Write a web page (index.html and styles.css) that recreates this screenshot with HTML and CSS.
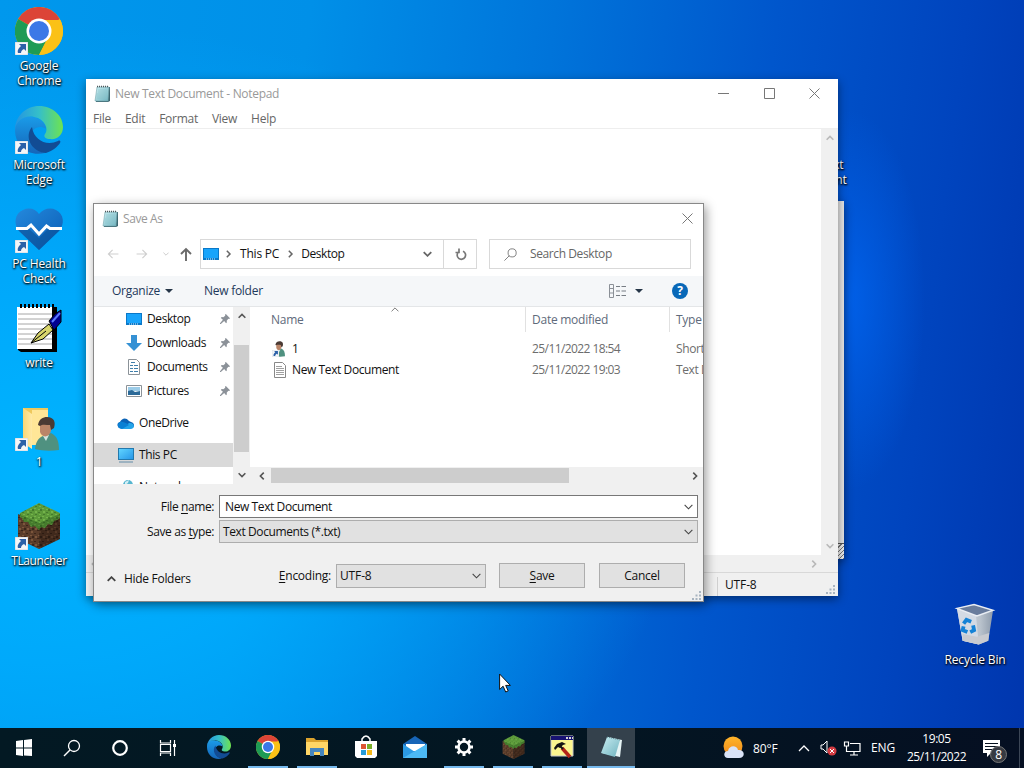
FILE: index.html
```html
<!DOCTYPE html>
<html lang="en">
<head>
<meta charset="utf-8">
<title>Desktop</title>
<link rel="stylesheet" href="styles.css">
</head>
<body>
<svg class="defs" width="0" height="0">
  <defs>
    <linearGradient id="edgeA" x1="0" y1="0" x2="1" y2="0"><stop offset="0" stop-color="#2494e2"/><stop offset=".5" stop-color="#35bfc9"/><stop offset="1" stop-color="#6fe34f"/></linearGradient>
    <linearGradient id="edgeB" x1="0" y1="0" x2="0" y2="1"><stop offset="0" stop-color="#1a9be8"/><stop offset="1" stop-color="#1565b9"/></linearGradient>
    <linearGradient id="pad" x1="0" y1="0" x2="1" y2="1"><stop offset="0" stop-color="#c9edf2"/><stop offset="1" stop-color="#6fb3bf"/></linearGradient>
    <linearGradient id="screen" x1="0" y1="0" x2="1" y2="1"><stop offset="0" stop-color="#60d4ff"/><stop offset="1" stop-color="#2797e8"/></linearGradient>
    <linearGradient id="heart" x1="0" y1="0" x2="1" y2="1"><stop offset="0" stop-color="#2488dc"/><stop offset="1" stop-color="#0a5db4"/></linearGradient>
    <linearGradient id="bin" x1="0" y1="0" x2="1" y2="0"><stop offset="0" stop-color="#cbd5df"/><stop offset=".65" stop-color="#b9c2cc"/><stop offset="1" stop-color="#8e9bab"/></linearGradient>
    <linearGradient id="fold" x1="0" y1="0" x2="1" y2="0"><stop offset="0" stop-color="#f8d775"/><stop offset="1" stop-color="#ffe9a6"/></linearGradient>
    <linearGradient id="sun" x1="0" y1="0" x2="0" y2="1"><stop offset="0" stop-color="#ffb52a"/><stop offset="1" stop-color="#f08a1c"/></linearGradient>
    <pattern id="grassPx" width="8" height="8" patternUnits="userSpaceOnUse"><path fill="#5c9a3a" d="M0 0h8v8H0z"/><path fill="#74b34b" d="M1 0h2v2H1zM5 3h2v1H5zM0 5h2v1H0zM4 6h2v1H4z"/><path fill="#447a2c" d="M4 1h2v1H4zM1 3h2v1H1zM6 6h2v2H6z"/></pattern>
    <pattern id="dirtPx" width="8" height="8" patternUnits="userSpaceOnUse"><path fill="#5a3c2a" d="M0 0h8v8H0z"/><path fill="#7c563c" d="M1 1h2v2H1zM5 4h2v2H5zM4 0h2v1H4z"/><path fill="#3a251a" d="M3 3h2v1H3zM0 6h2v1H0zM6 1h2v2H6z"/></pattern>
    <symbol id="chrome" viewBox="0 0 48 48">
      <circle cx="24" cy="24" r="24" fill="#fbc116"/>
      <path fill="#dc4437" d="M24 24 3.2 12A24 24 0 0 1 44.8 12z"/>
      <path fill="#1e9b55" d="M24 24 3.2 12A24 24 0 0 0 24 48l9.5-18.500z"/>
      <path fill="#fbc116" d="M24 13h21.300A24 24 0 0 1 24 48l9.500-18.500z"/>
      <circle cx="24" cy="24" r="12.500" fill="#fff"/><circle cx="24" cy="24" r="10" fill="#3b78e7"/>
    </symbol>
    <symbol id="edge" viewBox="0 0 48 48">
      <path fill="url(#edgeB)" d="M0 24C0 14 8 9 17 11c9 1 14 7 14 12-7-5-16 0-15 10 1 8 7 12 14 14C13 51 0 40 0 24z"/>
      <path fill="url(#edgeA)" d="M0 24C0 10 11 0 24 0c14 0 24 10 24 21 0 8-6 13-13 12-4 0-7-2-5-5 4-5 0-15-11-17C9 9 1 15 0 24z"/>
      <path fill="#124c94" d="M17 21c-8 9-1 25 14 26 7-2 12-7 14-10 1-2 0-3-2-2-11 5-24 0-26-14z"/>
    </symbol>
    <symbol id="shortcut" viewBox="0 0 13 13"><path fill="#f4f6f8" stroke="#b9c4cf" stroke-width=".6" d="M0 0h13v13H0z"/><path fill="#2c61a8" d="M4 2h7v7L9 7C7 8 6 9 6 11H3C2 8 4 6 6 4z"/></symbol>
    <symbol id="notepad" viewBox="0 0 16 17">
      <path fill="#3b6670" d="M14 2h2v14l-2 1H2v-1z"/><path fill="url(#pad)" stroke="#76a6ad" stroke-width=".6" d="M3 2h12l-1 14H1z"/>
      <path stroke="#4d595c" stroke-width="1.500" stroke-dasharray="1 1" d="M3 1.500h12"/><path stroke="#8ac3ca" stroke-width=".6" d="M4 5h9M4 7h9M3 9h10M3 11h10M3 13h10"/>
    </symbol>
    <symbol id="block" viewBox="0 0 42 46">
      <path fill="url(#dirtPx)" d="M0 11 21 21v25L0 36z"/><path fill="url(#dirtPx)" d="M42 11 21 21v25l21-10z"/><path fill="#1a0c08" opacity=".4" d="M42 11 21 21v25l21-10z"/>
      <path fill="url(#grassPx)" d="M21 0 42 10v5l-3 2-3 1-2 4-4-1-3 4-4-1-2 3-4-4-4 1-3-5-4 0-2-4-2-1v-4z"/><path fill="#1e4517" opacity=".35" d="m0 11 21 9 21-9v4l-6 3-2 4-4-1-3 4-4-1-2 3-4-4-4 1-3-5-4 0-2-4z"/>
    </symbol>
    <symbol id="person" viewBox="0 0 24 34">
      <path fill="#4f9180" d="M0 32c1-9 5-12 8-13l8-3c6 3 8 8 8 17-8 1-17 1-24-1z"/><path fill="#d3e6e2" d="m8 19 3 5 3-6z"/><path fill="#ba8568" d="M5 5h11v9c-2 7-9 7-11 1z"/><path fill="#4a3a34" d="M3 8C4 2 8 0 12 0c7 0 9 5 7 11l-3 2-1-5C11 8 7 7 5 9z"/>
    </symbol>
    <symbol id="desk" viewBox="0 0 16 12"><path fill="#0a78c8" d="M0 0h16v12H0z"/><path fill="#18a4fb" d="M1 1h14v9H1z"/><path stroke="#d8f1ff" stroke-dasharray="1 1" d="M3 11h10"/></symbol>
    <symbol id="pin" viewBox="0 0 12 12"><path fill="#8b9198" d="m7 0 5 5-1 1-1-.300L8 8l.300 2-1 1L5 8.500 1 12H0v-1l3.500-4L1 4.700l1-1L4 4l2.300-2L6 1z"/></symbol>
    <symbol id="down" viewBox="0 0 10 6"><path d="m.7.700 4.300 4.300L9.300.700" fill="none" stroke="currentColor" stroke-width="1.200"/></symbol>
    <symbol id="downB" viewBox="0 0 10 6"><path d="m.8.800L5 5 9.200.800" fill="none" stroke="currentColor" stroke-width="2"/></symbol>
    <symbol id="cross" viewBox="0 0 11 11"><path d="m.5.500 10 10m0-10-10 10" fill="none" stroke="currentColor"/></symbol>
    <symbol id="grip" viewBox="0 0 9 9"><path fill="#a8b4c0" d="M7 0h2v2H7zM7 3.500h2v2H7zM7 7h2v2H7zM3.500 3.500h2v2h-2zM3.500 7h2v2h-2zM0 7h2v2H0z"/></symbol>
    <symbol id="glass" viewBox="0 0 16 16"><circle cx="10" cy="6" r="5" fill="none" stroke="currentColor"/><path d="M6.500 9.500.5 15.500" stroke="currentColor"/></symbol>
  </defs>
</svg>

<main class="desktop">
  <div class="shortcuts">
    <div class="shortcut"><div class="art"><svg width="48" height="48"><use href="#chrome"/></svg><svg class="arrow"><use href="#shortcut"/></svg></div><span>Google<br>Chrome</span></div>
    <div class="shortcut"><div class="art"><svg width="48" height="48"><use href="#edge"/></svg><svg class="arrow"><use href="#shortcut"/></svg></div><span>Microsoft<br>Edge</span></div>
    <div class="shortcut"><div class="art"><svg width="48" height="48" viewBox="0 0 48 48"><path fill="url(#heart)" d="M24 45 4 26C-2 19 0 8 8 5c6-3 13-1 16 4 4-5 11-7 17-4 8 4 9 14 3 21z"/><path fill="#08498e" opacity=".5" d="M3 25l11-1 10 9 9-9 12 1-21 20z"/><path fill="none" stroke="#fff" stroke-width="3" d="M1 23.500h11l4-3.500 8 9 7.500-8 3.500 2.500h12"/></svg><svg class="arrow"><use href="#shortcut"/></svg></div><span>PC Health<br>Check</span></div>
    <div class="shortcut"><div class="art"><svg width="48" height="48" viewBox="0 0 48 48"><path fill="#000" d="M4 3h38v45H6l-3-2z"/><path fill="#fff" d="M2 3h35v42H2z"/><path stroke="#a6a6a6" d="M3 10h34M3 15h34M3 20h34M3 25h34M3 30h34M3 35h34M3 40h34"/><path stroke="#000" stroke-width="4" stroke-dasharray="2 2" d="M5 2h34"/><path fill="#000090" stroke="#000" d="m34 17 6-7 6-4v12l-7 8z"/><path fill="#d8d56c" stroke="#000" d="m16 39 7-10 11-9 4 6-10 9z"/><path stroke="#000" d="m16 39 15-12"/><path stroke="#5b78ff" stroke-width="2" d="m37 18 8-9"/></svg></div><span>write</span></div>
    <div class="shortcut"><div class="art"><svg width="48" height="48" viewBox="0 0 48 48"><path fill="#eec85c" d="M8 5h25v37H8z"/><path fill="url(#fold)" d="m8 5 9 6v35l-9-6z"/><path fill="#ffe697" d="M17 7h16v35H17z"/><svg x="20" y="14" width="24" height="34"><use href="#person"/></svg></svg><svg class="arrow"><use href="#shortcut"/></svg></div><span>1</span></div>
    <div class="shortcut"><div class="art"><svg width="48" height="48" viewBox="0 0 48 48"><use href="#block" x="3" y="1" width="42" height="46"/></svg><svg class="arrow"><use href="#shortcut"/></svg></div><span class="tight">TLauncher</span></div>
  </div>
  <div class="shortcut hidden-file"><span>New Text<br>Document</span></div>
  <div class="shortcut recycle"><svg width="38" height="43" viewBox="0 0 40 44"><path fill="url(#bin)" d="m1 5 6 34 17 4 10-4 5-32-20 5z"/><path fill="#d3dae4" d="m1 5 6 34 17 4-3-31z"/><path fill="#c9cbd0" d="m7 32 15 3 13-4-1 8-10 4-17-4z"/><path fill="#697c9c" stroke="#e9edf3" stroke-width="1.500" d="M1 5 19 1l20 6-17 6z"/><g fill="none" stroke="#1482d6" stroke-width="4"><path d="m8 21 3-4 5 2M18 23l1 5-4 2M12 30l-5-2 1-4"/></g></svg><span>Recycle Bin</span></div>

  <div class="window behind"><div class="behind-grip"></div></div>

  <section class="window notepad">
    <header class="titlebar"><svg width="16" height="17"><use href="#notepad"/></svg><h1>New Text Document - Notepad</h1>
      <div class="controls"><svg width="11" height="11"><path d="M0 5.500h11" stroke="#777"/></svg><svg width="11" height="11"><path d="M.5.500h10v10H.5z" fill="none" stroke="#777"/></svg><svg width="11" height="11"><use href="#cross"/></svg></div>
    </header>
    <nav class="menu"><span>File</span><span>Edit</span><span>Format</span><span>View</span><span>Help</span></nav>
    <div class="editor"><div class="paper"></div><div class="scroll-v pale"><svg class="chev up"><use href="#downB"/></svg><svg class="chev"><use href="#downB"/></svg></div></div>
    <div class="scroll-h pale"><svg class="chev left"><use href="#downB"/></svg><svg class="chev right"><use href="#downB"/></svg></div>
    <footer class="status"><span>UTF-8</span><svg width="9" height="9"><use href="#grip"/></svg></footer>
  </section>

  <section class="window dialog">
    <header class="titlebar"><svg width="16" height="17"><use href="#notepad"/></svg><h1>Save As</h1><svg class="close" width="11" height="11"><use href="#cross"/></svg></header>
    <div class="navbar">
      <div class="history"><svg width="12" height="10" viewBox="0 0 13 12"><path d="M6 1 1 6l5 5M1 6h12" fill="none" stroke="#cfcfcf" stroke-width="1.400"/></svg><svg width="12" height="10" viewBox="0 0 13 12"><path d="m7 1 5 5-5 5m5-5H0" fill="none" stroke="#cfcfcf" stroke-width="1.400"/></svg><svg class="tiny" width="6" height="4"><use href="#down"/></svg><svg width="12" height="13"><path d="m1 6 5-5 5 5M6 1v12" fill="none" stroke="#6a6a6a" stroke-width="1.900"/></svg></div>
      <div class="address"><svg width="16" height="12"><use href="#desk"/></svg><svg class="crumb" viewBox="0 0 5 8"><path d="m.8.800L4 4 .8 7.200" fill="none" stroke="#666" stroke-width="1.500"/></svg><span class="place">This PC</span><svg class="crumb" viewBox="0 0 5 8"><path d="m.8.800L4 4 .8 7.200" fill="none" stroke="#666" stroke-width="1.500"/></svg><span>Desktop</span><svg class="expand" width="9" height="6"><use href="#downB"/></svg></div>
      <div class="refresh"><svg width="12" height="13" viewBox="0 0 12 13"><path d="M7.500 3.200A4.200 4.200 0 1 1 3 4M3.500.500V4.500H0" transform="translate(1.500 0)" fill="none" stroke="#777" stroke-width="1.700"/></svg></div>
      <div class="search"><svg width="13" height="13"><use href="#glass"/></svg><span>Search Desktop</span></div>
    </div>
    <div class="toolbar"><span>Organize</span><i class="triangle"></i><span class="new-folder">New folder</span>
      <svg class="view" width="17" height="14"><path d="M.5.500h4v13h-4zM.5 4.500h4M.5 9h4" fill="none" stroke="#8b9097"/><path d="M7 2.500h4m1.500 0H17M7 7h4m1.500 0H17M7 11.500h4m1.500 0H17" stroke="#777d84"/></svg><i class="triangle"></i><span class="help">?</span></div>
    <div class="browser">
      <div class="tree">
        <div class="node sub"><svg width="16" height="12"><use href="#desk"/></svg><span>Desktop</span><svg class="pin"><use href="#pin"/></svg></div>
        <div class="node sub"><svg width="16" height="16"><path fill="#3591d4" d="M5 0h6v8h5l-8 8-8-8h5z"/></svg><span>Downloads</span><svg class="pin"><use href="#pin"/></svg></div>
        <div class="node sub"><svg width="16" height="16"><path fill="#fff" stroke="#8b9298" d="M2.500.500h8l3 3v12h-11z"/><path stroke="#3f7fab" d="M5 3.500h4M4 6.500h3m1 0h4M4 9.500h3m1 0h4M4 12.500h3m1 0h4"/></svg><span>Documents</span><svg class="pin"><use href="#pin"/></svg></div>
        <div class="node sub"><svg width="16" height="12"><path fill="#fff" stroke="#8b9298" d="M.5.500h15v11H.5z"/><path fill="#9ccce8" d="M2 2h12v4H2z"/><path fill="#2c6a98" d="m2 6 4-1 3 2 5-1v4H2z"/></svg><span>Pictures</span><svg class="pin"><use href="#pin"/></svg></div>
        <div class="node spaced"><svg width="16" height="11"><path fill="#0b63b6" d="M3 10a3 3 0 0 1-1-6C4 0 8-1 11 3l2 1c4 1 4 6 0 6z"/><path fill="#24a4e9" d="m3 11 8-6c5-1 7 5 2 6z"/><path fill="#0a80d4" d="M2 4c4-1 7 2 9 3l-7 4C-1 11-1 5 2 4z"/></svg><span>OneDrive</span></div>
        <div class="node spaced selected"><svg width="16" height="15"><path fill="#2379ad" d="M0 0h16v12H0z"/><path fill="url(#screen)" d="M1 1h14v10H1z"/><path stroke="#638ca8" d="M1 14h14"/></svg><span>This PC</span></div>
        <div class="node spaced"><svg width="16" height="15"><circle cx="10" cy="5" r="5" fill="#57b6d0"/><path fill="#d2eef5" d="m7 2 4-2-1 3-3 2z"/><path fill="#2a8fd0" d="M2 8h9v6H2z"/></svg><span>Network</span></div>
      </div>
      <div class="scroll-v"><svg class="chev up"><use href="#downB"/></svg><i class="thumb-v"></i><svg class="chev"><use href="#downB"/></svg></div>
      <div class="files">
        <div class="columns"><span>Name</span><span>Date modified</span><span>Type</span><svg class="sort" width="8" height="5"><use href="#down"/></svg></div>
        <div class="row"><svg width="16" height="16" viewBox="0 0 16 16"><use href="#person" x="2" y="0" width="11" height="16"/><use href="#shortcut" x="0" y="9" width="7" height="7"/></svg><span class="name">1</span><span class="date">25/11/2022 18:54</span><span class="type">Shortcut</span></div>
        <div class="row"><svg width="16" height="16"><path fill="#fff" stroke="#888" d="M2.500.500h8l3 3v12h-11z"/><path stroke="#a0a0a0" d="M4 4.500h6M4 6.500h8M4 8.500h8M4 10.500h8M4 12.500h8"/></svg><span class="name">New Text Document</span><span class="date">25/11/2022 19:03</span><span class="type">Text Document</span></div>
        <div class="scroll-h"><svg class="chev left"><use href="#downB"/></svg><i class="thumb-h"></i><svg class="chev right"><use href="#downB"/></svg></div>
      </div>
    </div>
    <div class="form">
      <div class="field first"><label>File <u>n</u>ame:</label><div class="combo input"><span>New Text Document</span><svg width="9" height="6"><use href="#down"/></svg></div></div>
      <div class="field"><label>Save as <u>t</u>ype:</label><div class="combo"><span>Text Documents (*.txt)</span><svg width="9" height="6"><use href="#down"/></svg></div></div>
      <div class="actions"><svg class="hide-icon" width="9" height="6"><use href="#downB"/></svg><span class="hide">Hide Folders</span><label><u>E</u>ncoding:</label><div class="combo encoding"><span>UTF-8</span><svg width="9" height="6"><use href="#down"/></svg></div><button><u>S</u>ave</button><button>Cancel</button></div>
      <svg class="grip" width="9" height="9"><use href="#grip"/></svg>
    </div>
  </section>
  <svg class="cursor" width="12" height="20" viewBox="0 0 12 20"><path fill="#fff" stroke="#111" d="M.6 1v15.500l3.500-3.300L6.700 19l2.500-1.100-2.500-5.500h4.700z"/></svg>
</main>

<footer class="taskbar">
  <div class="system">
    <svg width="48" height="40"><path fill="#fff" d="m16 13 7-1v7.500h-7zM24 12l8-1v8.500h-8zM16 20.500h7V28l-7-1zM24 20.500h8V28l-8-.500z"/></svg>
    <svg width="48" height="40"><circle cx="26" cy="18" r="5.500" fill="none" stroke="#fff" stroke-width="1.300"/><path stroke="#fff" stroke-width="1.400" d="m22 22-6 6"/></svg>
    <svg width="48" height="40"><circle cx="24" cy="20" r="6.800" fill="none" stroke="#fff" stroke-width="2.200"/></svg>
    <svg width="48" height="40"><path fill="none" stroke="#fff" stroke-width="1.200" d="M16.500 12v3h10v-3m-10 4.500h10v7h-10zM16.500 28v-3h10v3M30.500 12v16"/><path fill="#fff" d="M29 16h3v3h-3z"/></svg>
  </div>
  <div class="apps">
    <div class="app"><svg width="24" height="24"><use href="#edge"/></svg></div>
    <div class="app open"><svg width="24" height="24"><use href="#chrome"/></svg></div>
    <div class="app open"><svg width="22" height="20"><path fill="#dba32d" d="M0 1h8l2 2h12v15H0z"/><path fill="#ffd666" d="M0 5h22v13H0z"/><path fill="#4686be" d="M4 11h14v8h-4v-4H8v4H4z"/></svg></div>
    <div class="app"><svg width="24" height="24"><path fill="none" stroke="#fff" stroke-width="1.500" d="M8 7V4q4-6 8 0v3"/><path fill="#fff" d="M1 6h22v15l-2 2H3l-2-2z"/><path fill="#dd5532" d="M7 9h5v5H7z"/><path fill="#79ae29" d="M13 9h5v5h-5z"/><path fill="#279bd7" d="M7 15h5v5H7z"/><path fill="#f6b91b" d="M13 15h5v5h-5z"/></svg></div>
    <div class="app"><svg width="24" height="23"><path fill="#1765b7" d="M0 8 12 0l12 8v14H0z"/><path fill="#fff" d="M3 8h19v7H3z"/><path fill="#2c9ae4" d="m0 8 12 8 12-8v14H0z"/><path fill="#4cb9f4" d="m0 22 24-14v14z"/></svg></div>
    <div class="app open"><svg width="20" height="20" viewBox="-10 -10 20 20"><circle r="5.500" fill="none" stroke="#fff" stroke-width="2.600"/><g stroke="#fff" stroke-width="3"><path d="M0-9v3M0 6v3M-9 0h3M6 0h3M-6.400-6.400l2 2M4.400 4.400l2 2M-6.400 6.400l2-2M4.400-4.400l2-2"/></g></svg></div>
    <div class="app open"><svg width="23" height="24"><use href="#block"/></svg></div>
    <div class="app open"><svg width="24" height="24"><path fill="#fbf68f" stroke="#c9c9c9" d="M1 1h22v20H1z"/><path fill="#171273" d="M1 1h22v4H1z"/><path stroke="#d6d6d6" stroke-width="2" stroke-dasharray="2 1" d="M16 3h7"/><path stroke="#b42418" stroke-width="3.500" d="m12 13 8 9"/><path stroke="#151515" stroke-width="2" d="m9 10 4 4"/><path fill="#151515" d="m4 13 3-4 5-2 4 2-3 1-3 3-2-1-3 3z"/></svg></div>
    <div class="app open active"><svg width="23" height="23"><path fill="#e6f4f5" d="m8 1 14 3-2 17-18-4z"/><path fill="url(#pad)" d="m7 1 13 3-5 17-14-4z"/><path stroke="#50838d" stroke-dasharray="1 1" d="m7 1 13 3"/></svg></div>
  </div>
  <div class="tray">
    <svg class="weather" width="24" height="24"><circle cx="11" cy="10" r="9.500" fill="url(#sun)"/><path fill="#d9e3f8" d="M6 22c-5 0-5-7 0-7 1-6 9-6 10-1 7-1 8 8 1 8z"/></svg>
    <span class="temp">80°F</span>
    <svg class="tray-up" width="12" height="7"><path d="m1 6 5-5 5 5" fill="none" stroke="#fff" stroke-width="1.300"/></svg>
    <svg class="sound" width="17" height="16"><path fill="none" stroke="#fff" d="M1 5h2l4-4v12L3 9H1z"/><circle cx="12" cy="11" r="4.500" fill="#d33b42"/><path stroke="#fff" d="m10 9 4 4m0-4-4 4"/></svg>
    <svg class="net" width="17" height="15"><path fill="none" stroke="#fff" stroke-width="1.200" d="M6 2.500h10v8H3M.5 1h4v4h-4zM2.500 5v6M10 11v3m-4 0h8"/></svg>
    <span class="lang">ENG</span>
    <div class="clock"><span>19:05</span><span>25/11/2022</span></div>
    <div class="notice"><svg width="17" height="17"><path fill="#fff" d="M0 0h17v13H8l-4 4v-4H0z"/><path stroke="#07121f" d="M2 3.500h13M2 6.500h13M2 9.500h8"/></svg><b>8</b></div>
    <i class="show-desktop"></i>
  </div>
</footer>
</body>
</html>
```
FILE: styles.css
```css
* { box-sizing: border-box; }
body { margin: 0; width: 1024px; height: 768px; overflow: hidden; display: flex; flex-direction: column; font: 12px/16px "Open Sans", "Noto Sans", sans-serif; letter-spacing: -.4px; color: #111; }
svg { display: block; flex: none; overflow: visible; }
.defs { position: absolute; }
h1 { margin: 0; font: inherit; letter-spacing: -.31px; }
u { text-underline-offset: 2px; text-decoration-thickness: 1px; }

.desktop { position: relative; height: 728px; flex: none; background:
  radial-gradient(ellipse 75px 190px at 850px 300px, rgba(0, 100, 240, .8), transparent),
  linear-gradient(97deg, #0098ed 0%, #0090e8 28%, #0074da 50%, #0056cc 70%, #0044be 87%, #0036ae 100%);
}
.desktop::before { content: ""; position: absolute; inset: 0; background: radial-gradient(ellipse 620px 460px at 60px 480px, #00b4ff 0%, rgba(0, 174, 255, .8) 40%, transparent 100%); }

.shortcuts { position: relative; width: 78px; padding-top: 7px; display: flex; flex-direction: column; }
.shortcut { height: 99px; display: flex; flex-direction: column; align-items: center; color: #fff; line-height: 15px; letter-spacing: -.15px; text-align: center; text-shadow: 0 1px 2px #000, 1px 1px 2px #000; }
.shortcut span { margin-top: 3px; white-space: nowrap; }
.shortcut .tight { letter-spacing: -.4px; }
.art { position: relative; height: 48px; }
.arrow { position: absolute; left: 0; bottom: 0; width: 13px; height: 13px; }
.recycle { position: absolute; left: 935px; top: 603px; width: 80px; }
.recycle span { margin-top: 6px; }
.hidden-file { position: absolute; left: 779px; top: 154px; width: 78px; }

.window { position: absolute; display: flex; flex-direction: column; background: #fff; box-shadow: 0 3px 9px rgba(0, 0, 0, .45); }
.behind { left: 500px; top: 201px; width: 344px; height: 358px; background: #e4e4e4; }
.behind-grip { margin: auto 0 0 auto; width: 6px; height: 16px; border-top: 1px solid #555; background: repeating-linear-gradient(135deg, #eee 0 2px, #777 2px 3px); }
.notepad { left: 86px; top: 79px; width: 752px; height: 517px; }
.titlebar { height: 29px; flex: none; display: flex; align-items: center; gap: 5px; padding-left: 8px; color: #999; }
.controls { margin-left: auto; display: flex; gap: 34.5px; padding-right: 18px; color: #777; }
.menu { height: 20px; padding: 3px 7px; display: flex; gap: 14px; color: #666; letter-spacing: -.27px; }
.editor { display: flex; height: 427px; border-top: 1px solid #eee; }
.paper { flex: 1; }
.scroll-v { width: 17px; flex: none; background: #f0f0f0; display: flex; flex-direction: column; align-items: center; padding: 6px 0; color: #555; }
.scroll-v .chev:last-child { margin-top: auto; }
.scroll-h { height: 17px; flex: none; background: #f0f0f0; display: flex; align-items: center; padding: 0 4px; color: #555; }
.pale { color: #b9b9b9; }
.notepad > .scroll-h { padding-right: 20px; }
.chev { width: 8px; height: 6px; }
.up { transform: rotate(180deg); }
.left { transform: rotate(90deg); }
.right { transform: rotate(-90deg); margin-left: auto; }
.status { flex: 1; border-top: 1px solid #d8d8d8; background: #f0f0f0; display: flex; padding: 4px 3px 0 631px; letter-spacing: -.14px; }
.status span { border-left: 1px solid #d0d0d0; padding-left: 7px; }
.status svg { margin: 8px 0 0 auto; }

.dialog { left: 93px; top: 203px; width: 611px; height: 399px; border: 1px solid #888; box-shadow: 2px 3px 10px rgba(0, 0, 0, .4); }
.dialog .titlebar { padding-right: 10px; }
.dialog h1 { letter-spacing: -.4px; }
.close { margin-left: auto; color: #777; }
.navbar { display: flex; height: 30px; margin-top: 6px; flex: none; }
.history { width: 106px; display: flex; align-items: center; padding-left: 13px; gap: 17px; }
.history .tiny { margin: 0 -6px 0 -2px; color: #bbb; }
.address { width: 244px; border: 1px solid #d9d9d9; display: flex; align-items: center; padding: 0 11px 0 2px; letter-spacing: -.2px; }
.address .place { margin-right: 9px; }
.crumb { width: 5px; height: 8px; margin: 0 9px 0 7px; }
.place + .crumb { margin-left: 0; margin-right: 8px; }
.address span:last-of-type { letter-spacing: -.45px; }
.expand { margin-left: auto; color: #666; }
.refresh { width: 33px; border: 1px solid #d9d9d9; border-left: 0; display: grid; place-items: center; }
.search { width: 202px; margin-left: 12px; border: 1px solid #d9d9d9; display: flex; align-items: center; padding-left: 14px; gap: 13px; color: #666; }
.toolbar { height: 31px; flex: none; margin-top: 7px; padding: 0 15px 0 18px; border-bottom: 1px solid #e4e6e8; background: #f5f7f9; display: flex; align-items: center; color: #1e395b; letter-spacing: -.27px; }
.triangle { border: 4px solid transparent; border-top: 4px solid #263648; border-bottom: 0; margin-left: 5px; }
.new-folder { margin-left: 31px; }
.view { margin-left: auto; }
.view + .triangle { margin-left: 9px; }
.help { width: 16px; height: 16px; margin-left: 29px; border-radius: 50%; background: #0868b8; color: #fff; font-weight: 700; text-align: center; letter-spacing: 0; }
.browser { height: 177px; display: flex; flex: none; overflow: hidden; }
.tree { width: 139px; height: 177px; overflow: hidden; }
.node { height: 24px; display: flex; align-items: center; gap: 5px; padding-left: 24px; }
.node.sub { padding: 0 3px 0 32px; }
.spaced { margin-top: 8px; }
.selected { background: #d9d9d9; }
.pin { width: 10px; height: 10px; margin-left: auto; }
.browser > .scroll-v { width: 17px; height: 177px; }
.thumb-v { width: 15px; height: 107px; margin-top: 26px; background: #cdcdcd; }
.files { flex: 1; min-width: 0; display: flex; flex-direction: column; position: relative; overflow: hidden; }
.columns { display: flex; height: 25px; margin-bottom: 6px; line-height: 26px; color: #606a7b; letter-spacing: -.25px; }
.columns span { padding-left: 6px; border-left: 1px solid #e1e1e1; width: 144px; flex: none; }
.columns span:first-child { width: 275px; padding-left: 21px; border: 0; }
.sort { position: absolute; left: 141px; top: 0; transform: rotate(180deg); color: #777; }
.row { height: 21px; display: flex; align-items: center; padding-left: 22px; }
.row span { flex: none; white-space: nowrap; }
.row .name { width: 240px; padding-left: 4px; }
.row .date { width: 144px; padding-left: 4px; color: #6d6d6d; letter-spacing: -.58px; }
.row .type { padding-left: 4px; color: #6d6d6d; }
.files .scroll-h { margin-top: auto; padding: 0 4px 0 8px; }
.thumb-h { width: 298px; height: 15px; margin-left: 5px; background: #cdcdcd; }
.form { flex: 1; background: #f0f0f0; padding-top: 11px; position: relative; }
.field { display: flex; align-items: center; height: 23px; margin-bottom: 2px; padding-right: 5px; }
.field label { width: 125px; text-align: right; padding-right: 5px; padding-top: 1px; flex: none; }
.combo { height: 23px; flex: 1; border: 1px solid #adadad; background: #e1e1e1; display: flex; align-items: center; justify-content: space-between; padding: 0 4px 0 3px; }
.combo.input { border-color: #777; background: #fff; padding-left: 5px; }
.combo svg { color: #444; }
.actions { display: flex; align-items: center; height: 25px; margin-top: 20px; padding: 0 18px 0 13px; }
.hide-icon { transform: rotate(180deg); margin-top: 7px; color: #444; }
.hide { margin: 7px auto 0 8px; letter-spacing: -.3px; }
.actions label { margin-right: 5px; letter-spacing: -.25px; }
.encoding { width: 150px; height: 24px; flex: none; letter-spacing: -.14px; }
button { width: 86px; height: 25px; padding: 0; margin-left: 13px; border: 1px solid #adadad; background: #e1e1e1; font: inherit; letter-spacing: -.3px; color: inherit; }
button + button { margin-left: 14px; }
.grip { position: absolute; right: 2px; bottom: 1px; }
.cursor { position: absolute; left: 499px; top: 673px; }

.taskbar { height: 40px; flex: none; display: flex; background: linear-gradient(90deg, #031923, #031622 55%, #050f22); color: #fff; letter-spacing: -.14px; }
.system { display: flex; width: 194px; }
.apps { display: flex; }
.app { width: 49px; display: grid; place-items: center; border: solid transparent; border-width: 0 4px 2px; }
.open { border-image: linear-gradient(#76b9ed, #76b9ed) 1; border-width: 0 0 2px; width: 40px; margin: 0 4px 0 5px; }
.active { background: #34414c; width: 48px; margin: 0 0 0 1px; }
.tray { margin-left: auto; display: flex; align-items: center; }
.temp { margin-left: 7px; width: 45px; padding-top: 1px; }
.sound { margin-left: 10px; }
.net { margin-left: 7px; }
.lang { margin-left: 10px; width: 36px; }
.clock { width: 59px; display: flex; flex-direction: column; align-items: center; line-height: 18px; letter-spacing: -.45px; }
.notice { position: relative; margin-left: 17px; }
.notice b { position: absolute; left: 7px; top: 6px; width: 17px; height: 17px; border-radius: 50%; border: 1px solid #777; background: #363a42; font-size: 12px; line-height: 15px; text-align: center; font-weight: 400; }
.show-desktop { align-self: stretch; width: 5px; margin-left: 19px; border-left: 1px solid #3c4656; }
```
